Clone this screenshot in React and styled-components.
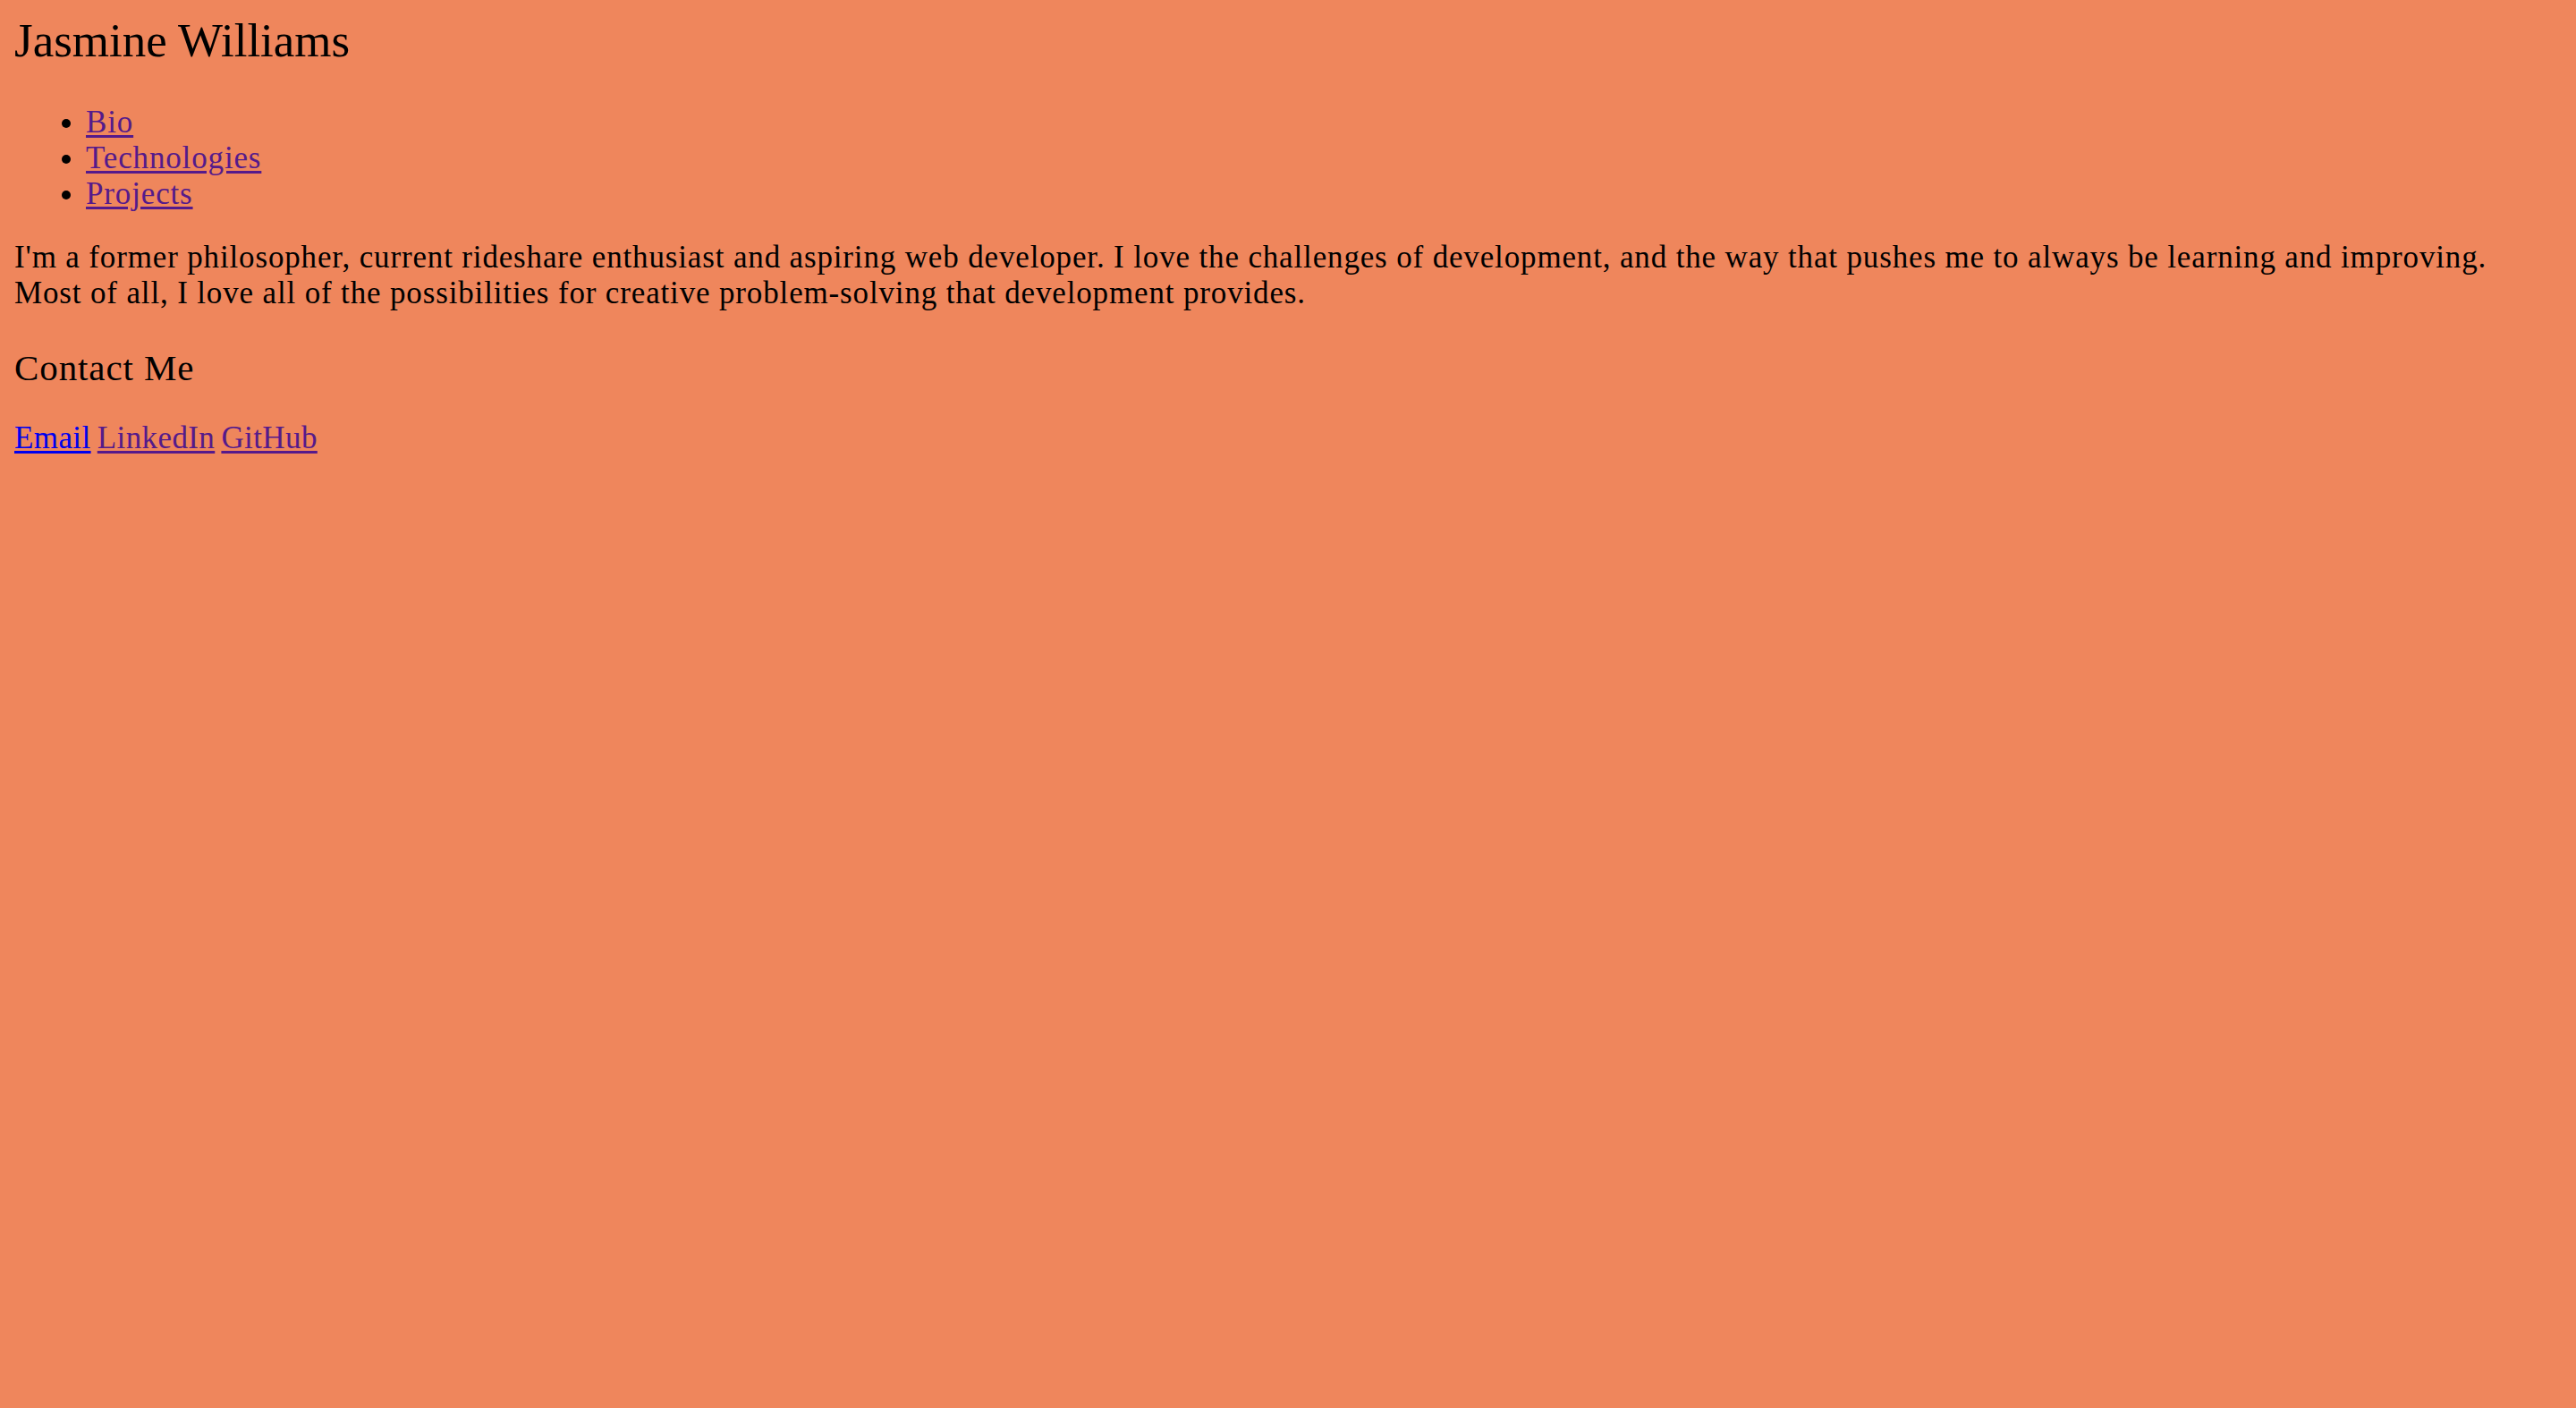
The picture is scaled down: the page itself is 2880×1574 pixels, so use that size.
import styled, { createGlobalStyle } from 'styled-components';

const GlobalStyle = createGlobalStyle`
  html, body {
    margin: 0;
    background: #ef865c;
  }
  body {
    font-family: "Liberation Serif", "Times New Roman", serif;
    color: #000;
  }
`;

const Page = styled.div`
  padding: 15px 16px;
  font-size: 35px;
  line-height: 40px;
  letter-spacing: 0.85px;
`;

const Name = styled.h1`
  margin: 0 0 41px;
  font-size: 53px;
  line-height: 61px;
  font-weight: 400;
  letter-spacing: 0;
`;

const NavList = styled.ul`
  margin: 0;
  padding-left: 80px;
  list-style: disc;
`;

const Link = styled.a`
  color: ${(p) => (p.$fresh ? '#0000ee' : '#551a8b')};
  text-decoration: underline;
  text-underline-offset: 3px;
`;

const Bio = styled.p`
  margin: 31px 0 0;
  max-width: 2800px;
`;

const SectionTitle = styled.h3`
  margin: 39px 0 0;
  font-size: 41px;
  line-height: 48px;
  font-weight: 400;
  letter-spacing: 0.9px;
`;

const ContactRow = styled.p`
  margin: 35px 0 0;
  letter-spacing: 0.4px;
  word-spacing: -2px;
`;

const navItems = ['Bio', 'Technologies', 'Projects'];

const App = () => {
  return (
    <>
      <GlobalStyle />
      <Page>
        <header>
          <Name>Jasmine Williams</Name>
          <nav>
            <NavList>
              {navItems.map((item) => (
                <li key={item}>
                  <Link href={`#${item.toLowerCase()}`}>{item}</Link>
                </li>
              ))}
            </NavList>
          </nav>
        </header>
        <Bio>
          I'm a former philosopher, current rideshare enthusiast and aspiring web developer. I love the
          challenges of development, and the way that pushes me to always be learning and improving. Most
          of all, I love all of the possibilities for creative problem-solving that development provides.
        </Bio>
        <SectionTitle>Contact Me</SectionTitle>
        <ContactRow>
          <Link $fresh href="#email">Email</Link> <Link href="#linkedin">LinkedIn</Link>{' '}
          <Link href="#github">GitHub</Link>
        </ContactRow>
      </Page>
    </>
  );
};

export default App;
